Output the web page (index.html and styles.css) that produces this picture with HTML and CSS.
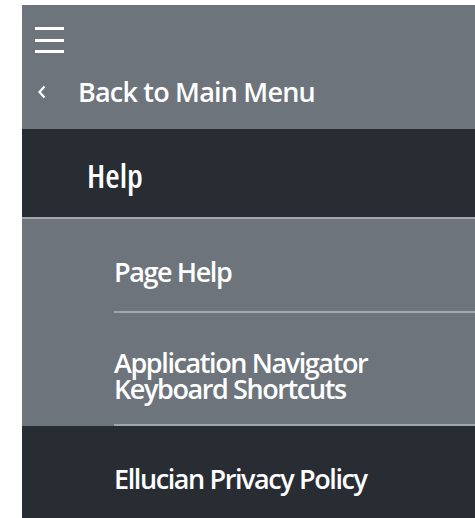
FILE: index.html
```html
<!DOCTYPE html>
<html lang="en">
<head>
<meta charset="utf-8">
<title>Help menu</title>
<link rel="stylesheet" href="styles.css">
</head>
<body>
<nav class="panel">
  <div class="topbar">
    <button class="menu-btn" aria-label="Menu">
      <span class="bar"></span><span class="bar"></span><span class="bar"></span>
    </button>
    <a class="back" href="#">
      <svg class="chev" width="10" height="14" viewBox="0 0 10 14"><polyline points="7.5,1.5 2.5,7 7.5,12.5" fill="none" stroke="#fff" stroke-width="2.2"/></svg>
      <span class="back-label">Back to Main Menu</span>
    </a>
  </div>
  <div class="section-title">Help</div>
  <ul class="items">
    <li class="item"><a href="#">Page Help</a></li>
    <li class="item"><a href="#">Application Navigator<br>Keyboard Shortcuts</a></li>
    <li class="item active"><a href="#">Ellucian Privacy Policy</a></li>
  </ul>
</nav>
</body>
</html>
```

FILE: styles.css
```css
html, body {
  margin: 0;
  padding: 0;
  background: #fff;
  overflow: hidden;
}

body {
  font-family: "Open Sans", "Noto Sans", sans-serif;
  font-weight: 600;
  color: #fff;
}

.panel {
  margin: 5px 0 0 22px;
  background: #6d747b;
  height: calc(100vh - 5px);
  overflow: hidden;
}

.topbar {
  height: 124px;
  box-sizing: border-box;
  padding: 22px 0 0 13px;
}

.menu-btn {
  display: flex;
  flex-direction: column;
  gap: 8.5px;
  width: 29px;
  padding: 0;
  border: 0;
  background: none;
  cursor: pointer;
}

.bar {
  display: block;
  height: 3px;
  background: #fff;
}

.back {
  display: flex;
  align-items: center;
  margin-top: 24px;
  padding-left: 2px;
  color: #fff;
  text-decoration: none;
  font-size: 27px;
  line-height: 30px;
  letter-spacing: -0.8px;
}

.chev {
  margin-right: 31px;
}

.section-title {
  background: #282d34;
  height: 90px;
  box-sizing: border-box;
  padding: 30px 0 0 65px;
  font-size: 33px;
  line-height: 34px;
  font-stretch: 75%;
  border-bottom: 2px solid #a3a7ab;
}

.items {
  list-style: none;
  margin: 0;
  padding: 0;
}

.item {
  padding-left: 92px;
}

.item a {
  display: flex;
  align-items: center;
  min-height: 32px;
  padding: 37px 0 23px;
  font-size: 27px;
  line-height: 25.5px;
  letter-spacing: -1.4px;
  color: #fff;
  text-decoration: none;
  border-bottom: 2px solid #a3a7ab;
}

.item.active {
  background: #282d34;
}
```
